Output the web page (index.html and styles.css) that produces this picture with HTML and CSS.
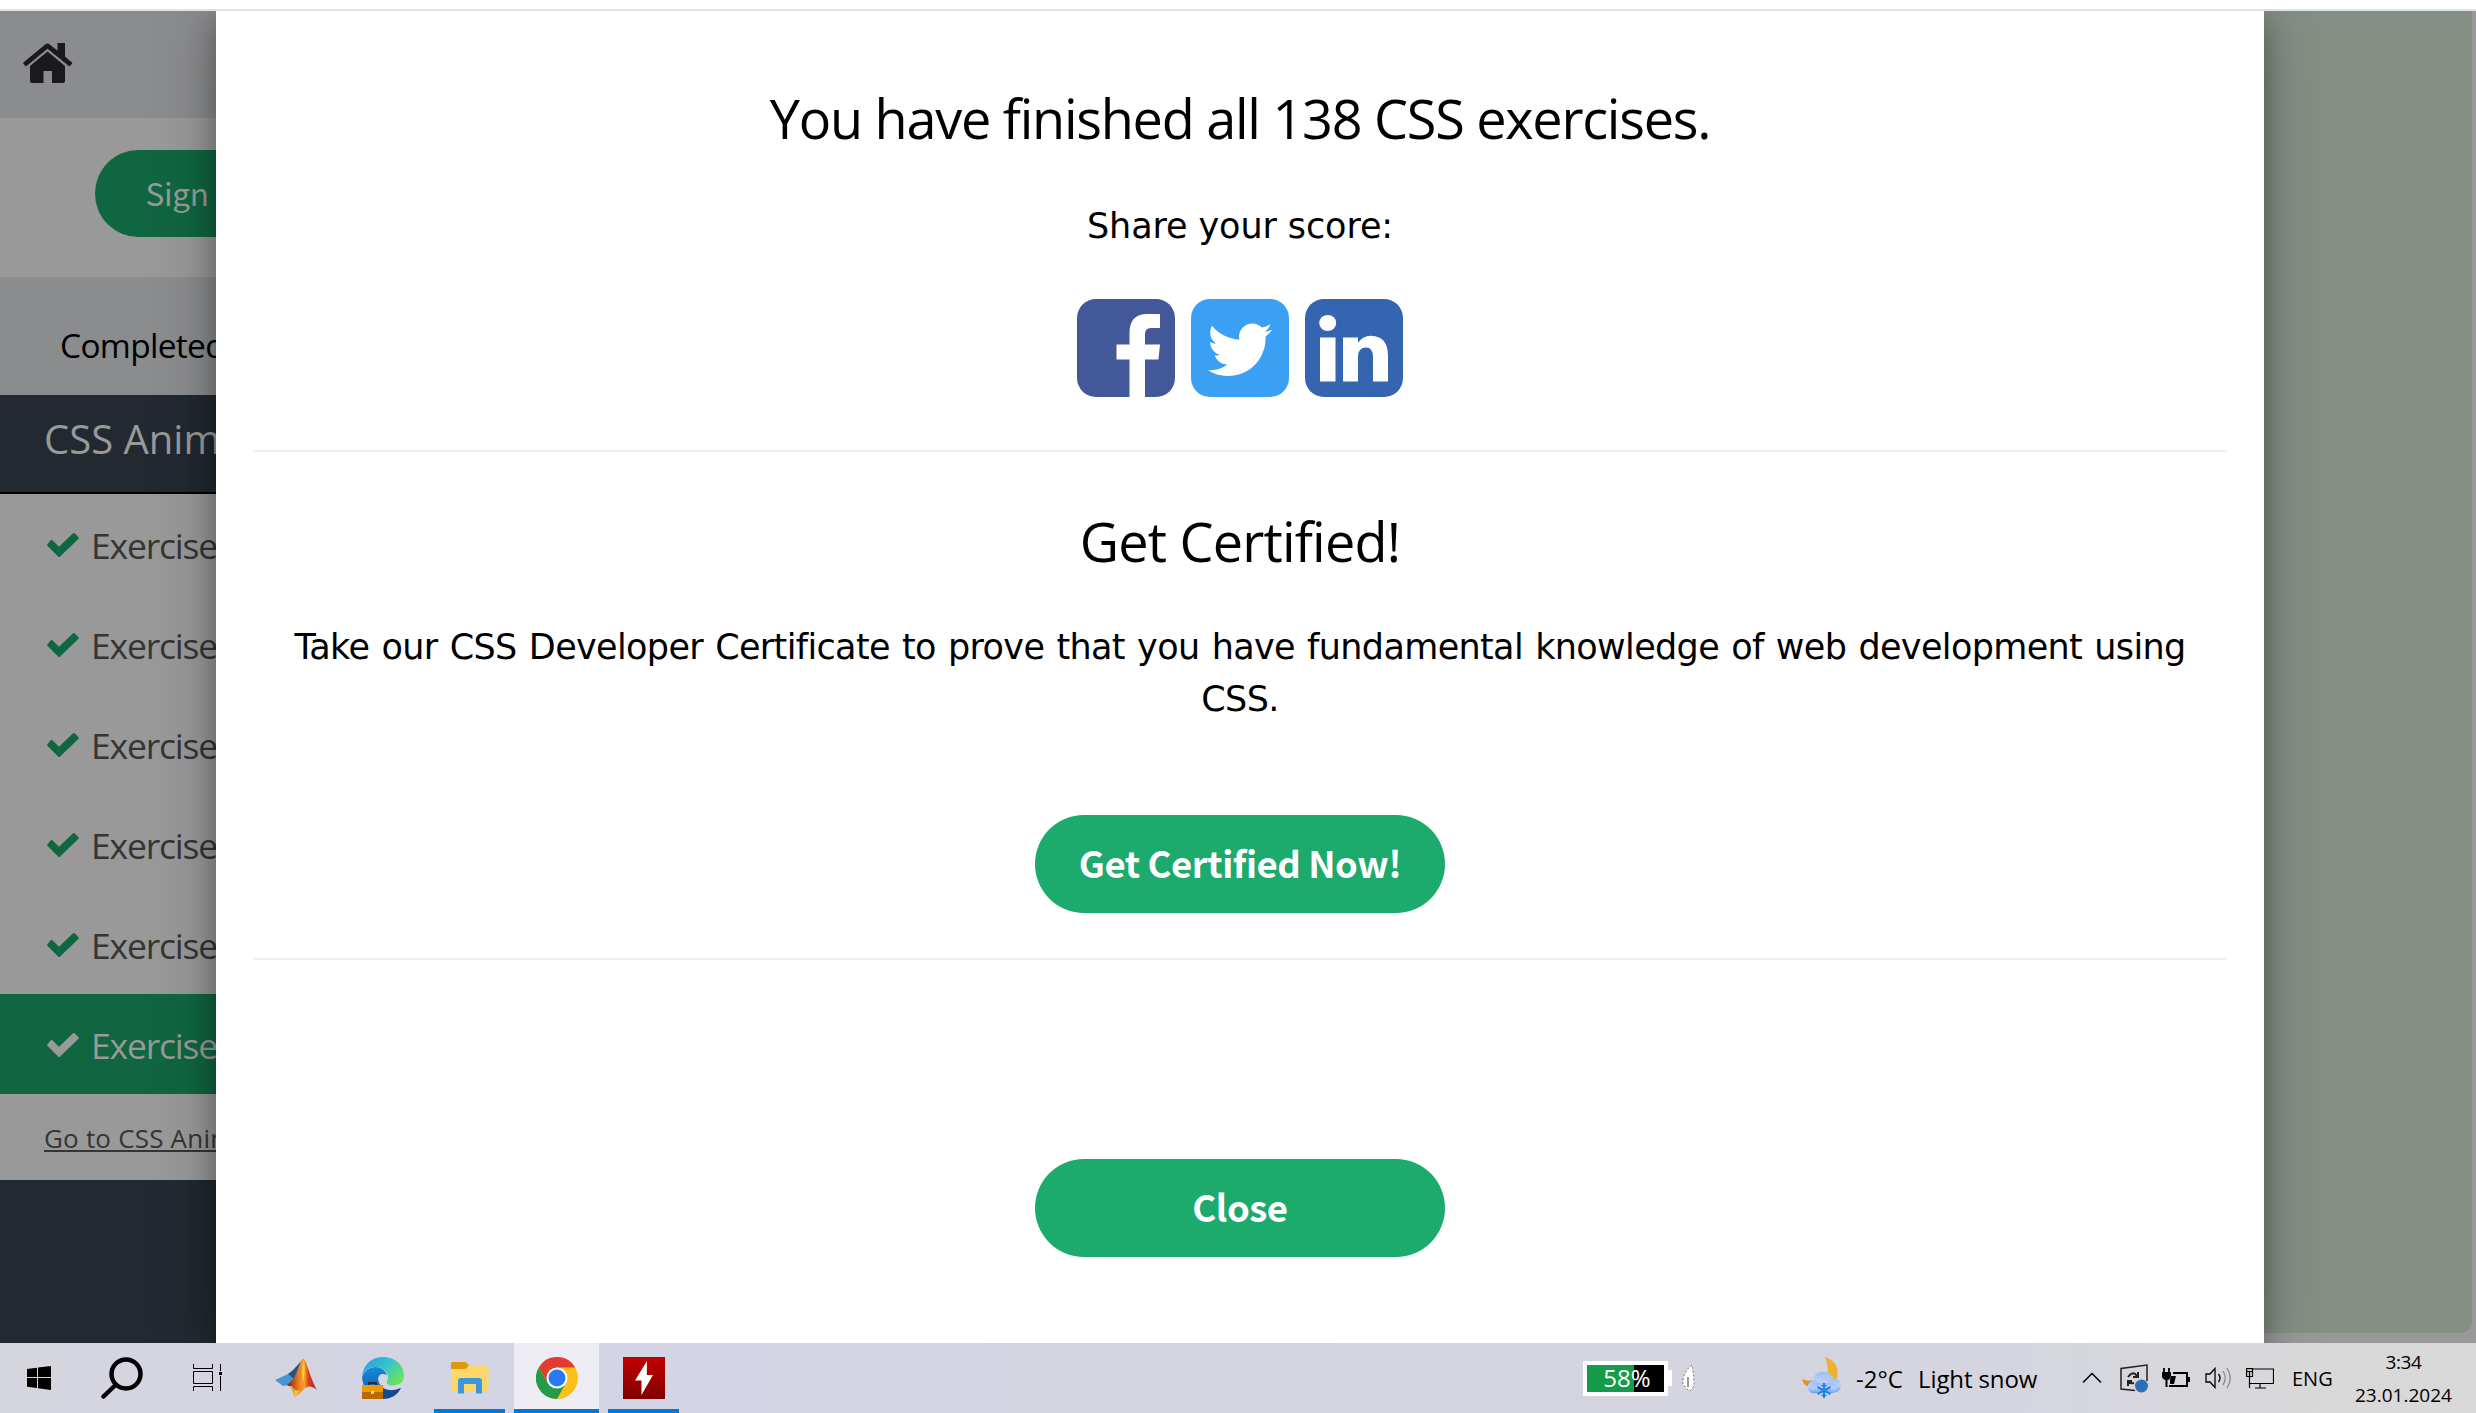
FILE: index.html
```html
<!DOCTYPE html>
<html lang="en">
<head>
<meta charset="utf-8">
<title>CSS Exercises</title>
<link rel="stylesheet" href="styles.css">
</head>
<body>
<svg class="defs" width="0" height="0" aria-hidden="true">
  <symbol id="check" viewBox="0 0 32 24"><path d="M5.500 7.300 12 13.700 25.800.6q1.100-1 2.100 0l3.400 3.300q1 1.100 0 2.100L13.100 23.500q-1 1-2 0L.6 13.100q-1-1 0-2l3-3.700q1-1.100 1.900-.1Z"/></symbol>
</svg>
<div class="screen">
  <div class="chrome-edge"></div>
  <main class="page">
    <nav class="sidebar">
      <div class="home">
        <svg width="50" height="40" viewBox="0 0 50 40"><path d="M22.500 1.200q2-1.500 4 0l8 6.500V0H42v13.500l7 6q.6.6 0 1.200L47 23q-.6.5-1.200 0L24.500 5.800 3.600 23q-.7.5-1.200 0L.3 20.600q-.5-.6.1-1.200Z"/><path d="M24.500 8.500 42 23v15q0 2-2 2H29V28h-8.500v12H9q-2 0-2-2V23Z"/></svg>
      </div>
      <div class="sign"><span class="sign-button">Sign Up</span></div>
      <div class="completed">Completed 138</div>
      <div class="section">CSS Animations</div>
      <ul class="exercises">
        <li><svg width="32" height="24"><use href="#check"/></svg>Exercise 1</li>
        <li><svg width="32" height="24"><use href="#check"/></svg>Exercise 2</li>
        <li><svg width="32" height="24"><use href="#check"/></svg>Exercise 3</li>
        <li><svg width="32" height="24"><use href="#check"/></svg>Exercise 4</li>
        <li><svg width="32" height="24"><use href="#check"/></svg>Exercise 5</li>
        <li class="active"><svg width="32" height="24"><use href="#check"/></svg>Exercise 6</li>
      </ul>
      <div class="tutorial"><span>Go to CSS Animations Tutorial</span></div>
    </nav>

    <section class="modal">
      <h2 class="title finished">You have finished all 138 CSS exercises.</h2>
      <p class="share">Share your score:</p>
      <div class="social">
        <svg width="98" height="98" viewBox="0 0 98 98"><rect width="98" height="98" rx="19" fill="#435898"/><path fill="#fff" d="M83 15H70Q52.500 15 52.500 34V45.500H39.500V60.500H52.500V98H68V60.500H81.500L83 45.500H68V35Q68 29 74 29H83Z"/></svg>
        <svg width="98" height="98" viewBox="0 0 98 98"><rect width="98" height="98" rx="19" fill="#3b9ff3"/><path fill="#fff" transform="translate(16.500 18.300) scale(.1265)" d="M459.370 151.716c.325 4.548.325 9.097.325 13.645 0 138.720-105.583 298.558-298.558 298.558-59.452 0-114.680-17.219-161.137-47.106 8.447.974 16.568 1.299 25.340 1.299 49.055 0 94.213-16.568 130.274-44.832-46.132-.975-84.792-31.188-98.112-72.772 6.498.974 12.995 1.624 19.818 1.624 9.421 0 18.843-1.300 27.614-3.573-48.081-9.747-84.143-51.980-84.143-102.985v-1.299c13.969 7.797 30.214 12.670 47.431 13.319-28.264-18.843-46.781-51.005-46.781-87.391 0-19.492 5.197-37.360 14.294-52.954 51.655 63.675 129.300 105.258 216.365 109.807-1.624-7.797-2.599-15.918-2.599-24.040 0-57.828 46.782-104.934 104.934-104.934 30.213 0 57.502 12.670 76.670 33.137 23.715-4.548 46.456-13.320 66.599-25.340-7.798 24.366-24.366 44.833-46.132 57.827 21.117-2.273 41.584-8.122 60.426-16.243-14.292 20.791-32.161 39.308-52.628 54.253z"/></svg>
        <svg width="98" height="98" viewBox="0 0 98 98"><rect width="98" height="98" rx="19" fill="#3564b0"/><g fill="#fff"><ellipse cx="22.700" cy="24" rx="8.500" ry="8"/><path d="M15 38.500H30.500V82.500H15ZM38 38.500H53V44Q57 37 66 36.700Q83 37 83 57V82.500H68V58Q68 48.500 61 48.500Q53 48.500 53 58V82.500H38Z"/></g></svg>
      </div>
      <hr>
      <h2 class="title certified">Get Certified!</h2>
      <p class="pitch">Take our CSS Developer Certificate to prove that you have fundamental knowledge of web development using CSS.</p>
      <button class="button certify">Get Certified Now!</button>
      <hr class="second">
      <button class="button close">Close</button>
    </section>

    <aside class="backdrop"><div class="panel"></div></aside>
  </main>

  <footer class="taskbar">
    <div class="apps">
      <div class="app"><svg width="24" height="24" viewBox="0 0 24 24"><path d="M0 3 10 1.700V11H0ZM11 1.500 24 0V11H11ZM0 12H10V22L0 20.800ZM11 12H24V24L11 22.300Z"/></svg></div>
      <div class="app"><svg width="42" height="42" viewBox="0 0 42 42" fill="none" stroke="#000"><circle cx="25" cy="17" r="14.500" stroke-width="4.500"/><path d="M14.500 28 2.500 39.500" stroke-width="4.500" stroke-linecap="round"/></svg></div>
      <div class="app"><svg class="task-view" width="30" height="28" viewBox="0 0 30 28" fill="none" stroke="#000"><path d="M.5 0V4.500H19.500V0M.5 7.500H19.500V19.500H.5ZM.5 27V22.500H19.500V27M27.500 0V7M27.500 12V27"/><rect x="26" y="8" width="3" height="3" fill="#000" stroke="none"/></svg></div>
      <div class="app">
        <svg width="42" height="40" viewBox="0 0 42 40"><defs><linearGradient id="ml"><stop offset="0" stop-color="#7c1712"/><stop offset=".4" stop-color="#ef7f26"/><stop offset=".58" stop-color="#f6a128"/><stop offset=".72" stop-color="#d9401f"/><stop offset="1" stop-color="#b52118"/></linearGradient></defs><path d="M0 22 13 16Q20 13 28 1Q25 18 14 27L8 28Z" fill="#4597d3"/><path d="M13 16Q19 12 26 3L19 21Z" fill="#28547b"/><path d="M12 27Q19 22 23 12Q26 1 28.500.500C32 3 35 20 42 32Q34 25 28 32Q24 37 19 39Q19 29 12 27Z" fill="url(#ml)"/><path d="M28.500 2Q31 12 28 24Q26 14 28.500 2Z" fill="#ffd33f"/><path d="M14 28Q20 30 19 39Q24 37 25 32Q20 34 17 28Z" fill="#f8bc35"/></svg>
      </div>
      <div class="app">
        <svg width="42" height="42" viewBox="0 0 42 42"><defs><linearGradient id="eg" y2=".6"><stop offset="0" stop-color="#249fdf"/><stop offset=".55" stop-color="#35c2cf"/><stop offset="1" stop-color="#69e25b"/></linearGradient><linearGradient id="eb" x2="0" y2="1"><stop offset="0" stop-color="#1789dc"/><stop offset="1" stop-color="#0c57a4"/></linearGradient></defs><path d="M0 20C1 7 10 0 21 0C34 0 42 9 42 19C42 26 35 30 27 28Q23 26 26 22C27 14 20 10 13 10C6 10 2 14 0 20Z" fill="url(#eg)"/><path d="M0 20Q4 10 13 10Q22 10 25 18Q17 15 16 22Q17 31 27 33Q34 34 39 31Q33 42 21 42Q2 40 0 20Z" fill="url(#eb)"/><path d="M21 32Q30 35 39 31Q33 42 21 42Z" fill="#134a8b"/><path d="M7 28V26H14V28" fill="none" stroke="#3b2b20" stroke-width="2"/><path d="M0 28H21V42H0Z" fill="#b96909"/><path d="M0 28H21V35H0Z" fill="#ee9a05"/><path d="M9 34H12V37H9Z" fill="#ffd84a"/></svg>
      </div>
      <div class="app running">
        <svg width="38" height="32" viewBox="0 0 38 32"><path d="M0 1.500Q0 0 1.500 0H14Q16 0 18 3.500L15 7H0Z" fill="#dc9a09"/><path d="M0 7H14Q16 7 17.500 4H35.500Q37.500 4 37.500 6V28Q37.500 30 35.500 30H2Q0 30 0 28Z" fill="#fed76b"/><path d="M7 31.500V19Q7 16 10 16H28Q31 16 31 19V31.500H25V22H13V31.500Z" fill="#3b97dc"/></svg>
      </div>
      <div class="app running current">
        <svg width="42" height="42" viewBox="0 0 42 42"><circle cx="21" cy="21" r="21" fill="#fbc116"/><path d="M2.800 10.500A21 21 0 0 1 39.200 10.500H21L12 26Z" fill="#e33b2e"/><path d="M2.800 10.500A21 21 0 0 0 21 42L30 26 21 21 12 26Z" fill="#259a4b"/><circle cx="21" cy="21" r="10.500" fill="#fff"/><circle cx="21" cy="21" r="8.500" fill="#2a79ee"/></svg>
      </div>
      <div class="app running">
        <svg width="42" height="42" viewBox="0 0 42 42"><defs><linearGradient id="rd" x2="0" y2="1"><stop offset="0" stop-color="#c30000"/><stop offset="1" stop-color="#810000"/></linearGradient></defs><path d="M0 0H42V42H0Z" fill="url(#rd)"/><path d="M24 4 12 23.500H18.500V38L30 18H23.800Z" fill="#fff"/></svg>
      </div>
    </div>

    <div class="status">
      <div class="battery"><div class="charge">58%</div><div class="cap"></div></div>
      <svg class="leaf" width="13" height="29" viewBox="0 0 13 29"><path d="M10 1Q0 9 1 20L5 25 8 27 12 22Q12 13 10 1Z" fill="#fff" stroke="#555" stroke-width=".8" stroke-dasharray="2 2"/><path d="M6 13V23" stroke="#333" fill="none"/></svg>
      <svg class="weather" width="39" height="42" viewBox="0 0 39 42"><defs><linearGradient id="cl" x1="0" y1="0" x2="0" y2="1"><stop offset="0" stop-color="#9dbff5"/><stop offset=".5" stop-color="#b9d0fa"/><stop offset="1" stop-color="#6f9ff0"/></linearGradient></defs><path d="M23 0C35 3 39 16 33 25L26 28Q27 10 23 0Z" fill="#eeb132"/><path d="M0 22Q6 25 10 23V31Q2 30 0 22Z" fill="#ef8b22"/><g fill="url(#cl)"><circle cx="21" cy="25" r="10.500"/><circle cx="12" cy="30" r="6.500"/><circle cx="32" cy="28.500" r="7"/><rect x="9" y="26" width="26" height="10" rx="5"/></g><g stroke="#2482df" stroke-width="2"><path d="M22 26V41M15.500 30 28.500 37M15.500 37 28.500 30"/><path d="M19.500 28 22 30 24.500 28M19.500 39 22 37 24.500 39" fill="none" stroke-width="1.300"/></g></svg>
      <span class="temp">-2°C</span><span class="snow">Light snow</span>
      <svg class="chevron" width="20" height="12" viewBox="0 0 20 12" fill="none" stroke="#000" stroke-width="1.500"><path d="M1 10.500 10 1.500 19 10.500"/></svg>
      <svg class="sync" width="28" height="29" viewBox="0 0 28 29" fill="none" stroke="#222" stroke-width="1.500"><path d="M15 26.500 1 25V4.500L27 1V17"/><path d="M8 13Q13 6 17 12M18 8V13H13M14 19Q10 20 8 17M8 22V17H12" stroke-width="2"/><circle cx="21.500" cy="22" r="6.500" fill="#2b70b9" stroke="none"/></svg>
      <svg class="plug" width="29" height="20" viewBox="0 0 29 20"><path d="M2 0V5M7 0V5" stroke="#000" stroke-width="1.800"/><path d="M0 4H9V8Q8 12 5.500 12V19H3.500V12Q0 11 0 8Z"/><path d="M11 5H25V18H7" fill="none" stroke="#000" stroke-width="2"/><path d="M9 8H14L12 16H8V12ZM26 9H28V14H26Z"/></svg>
      <svg class="volume" width="27" height="22" viewBox="0 0 27 22" fill="none" stroke="#000" stroke-width="1.300"><path d="M1 7H5L10 1.500V20.500L5 15H1ZM13.500 7Q16.500 11 13.500 15"/><path d="M18 4Q22.500 11 18 18M22 1Q28.500 11 22 21" stroke="#888"/></svg>
      <svg class="network" width="28" height="21" viewBox="0 0 28 21" fill="none" stroke="#000" stroke-width="1.200"><path d="M6 1H27.500V15.500H4M14 15.500V19.500M9 20H20M.6.600H6.500V8.500H.6ZM3.500 4V20M1 3.500H6"/></svg>
      <span class="lang">ENG</span>
      <div class="clock"><span class="time">3:34</span><span>23.01.2024</span></div>
    </div>
  </footer>
</div>
</body>
</html>
```
FILE: styles.css
```css
* { box-sizing: border-box; }
body { margin: 0; background: #fff; font-family: "Open Sans", "Noto Sans", sans-serif; color: #000; }
h2, p, ul { margin: 0; padding: 0; }
svg { display: block; flex: none; }
.defs { position: absolute; }
.screen { display: grid; grid-template-rows: 11px 1332px 70px; height: 1413px; overflow: hidden; }
.chrome-edge { border-bottom: 2px solid #e2e2e2; }

.page { display: grid; grid-template-columns: 216px 2048px 212px; min-height: 0; overflow: hidden; background: #999; }

.sidebar { background: #222930; overflow: hidden; white-space: nowrap; }
.home { height: 107px; background: #8b8c8e; padding: 32px 0 0 23px; fill: #19191f; }
.sign { height: 159px; background: #999; padding: 32px 0 0 95px; }
.sign-button { display: block; width: 190px; height: 87px; padding-left: 50.5px; border-radius: 44px; background: #106641; color: #999; font: 31.5px/84px "Noto Sans CJK SC", sans-serif; letter-spacing: -.3px; }
.completed { height: 118px; background: #8b8c8e; padding: 9px 0 0 60px; font-size: 33.5px; line-height: 118px; letter-spacing: -.7px; }
.section { height: 99px; padding-left: 44px; border-bottom: 2px solid #000; color: #999; font-size: 40px; line-height: 88px; }
.exercises { list-style: none; background: #999; }
.exercises li { display: flex; align-items: center; gap: 12px; height: 100px; padding: 2px 0 0 47px; font-size: 35.5px; letter-spacing: -1.2px; color: #353535; }
.exercises svg { fill: #106641; }
.exercises .active { background: #106641; color: #999; }
.exercises .active svg { fill: #999; }
.tutorial { height: 86px; padding-left: 44px; background: #999; color: #353535; font-size: 26px; line-height: 88px; letter-spacing: .2px; }
.tutorial span { text-decoration: underline; text-decoration-thickness: 2px; text-underline-offset: 2px; }

.modal { position: relative; z-index: 1; display: flex; flex-direction: column; align-items: center; padding: 67px 37px 0; background: #fff; text-align: center; box-shadow: 0 10px 25px rgba(0,0,0,.26), 0 10px 60px rgba(0,0,0,.25); }
.title { font-size: 54px; font-weight: 400; line-height: 80px; }
.finished { letter-spacing: -1.26px; }
.certified { letter-spacing: -.8px; margin-top: -1px; }
.share, .pitch { font-family: "DejaVu Sans", sans-serif; font-size: 35px; line-height: 52px; }
.share { margin: 42px 0 47px; letter-spacing: -.1px; }
.social { display: flex; gap: 16px; }
.modal hr { width: 100%; height: 2px; margin: 53px 0 50px; border: 0; background: #eee; flex: none; }
.pitch { margin: 40px 0 90px; letter-spacing: -.65px; word-spacing: 1.7px; }
.button { width: 410px; height: 98px; padding: 0 0 4px; border: 0; border-radius: 49px; background: #1daa6d; color: #fff; font: bold 36.5px "Noto Sans CJK SC", sans-serif; flex: none; }
.certify { letter-spacing: -.45px; }
.close { letter-spacing: -.4px; }
.modal .second { margin: 45px 0 199px; }

.backdrop { padding: 0 4px 10px 0; background: #999; }
.panel { height: 100%; background: #868f86; border-bottom-right-radius: 11px; }

.taskbar { position: relative; z-index: 2; display: flex; justify-content: space-between; background: linear-gradient(90deg, #d5d5de, #d3d4e6 28%, #d4d4df 45%, #d4d5df 80%, #d8d8da 92%, #d9d9d9); }
.apps { display: grid; grid-template-columns: 78px repeat(7, 87px); }
.app { display: flex; align-items: center; justify-content: center; border-bottom: 0 solid #0078d7; }
.task-view { margin-right: 2px; }
.running { margin: 0 8px; padding-top: 4px; border-bottom-width: 4px; }
.current { margin: 0 1px; background: #ededf3; }
.status { display: flex; align-items: center; width: 893px; font-size: 24px; white-space: nowrap; }
.battery { display: flex; align-items: center; }
.charge { width: 85px; height: 35px; border: 4px solid #fff; background: linear-gradient(90deg, #169b4a 61%, #000 61%); color: #fff; line-height: 26px; text-align: center; padding-left: 3px; }
.cap { width: 4px; height: 16px; background: #fff; }
.leaf { margin-left: 10px; }
.weather { margin-left: 107px; }
.temp { width: 62px; margin-left: 15px; }
.snow { width: 121px; letter-spacing: -.1px; }
.chevron { margin-left: 43px; }
.sync { margin-left: 18px; }
.plug { margin-left: 14px; }
.volume { margin-left: 14px; }
.network { margin-left: 14px; }
.lang { width: 41px; margin-left: 18px; font-size: 20px; }
.clock { display: flex; flex-direction: column; align-items: center; margin-left: 22px; padding-top: 1px; font-size: 19px; line-height: 33px; }
.time { letter-spacing: -.4px; }
```
